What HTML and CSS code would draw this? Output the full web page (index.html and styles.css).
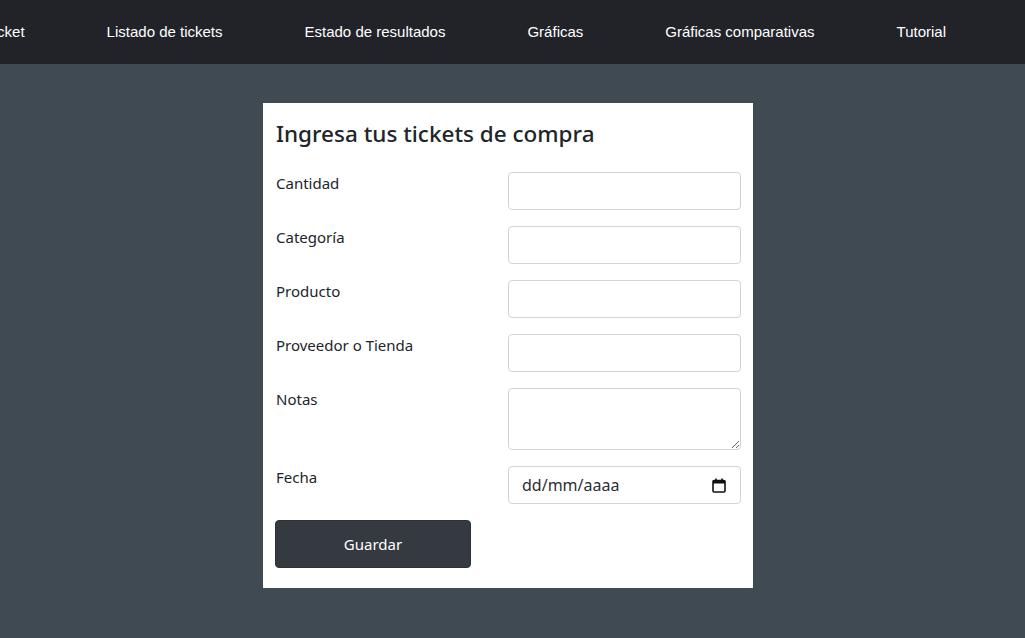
FILE: index.html
```html
<!DOCTYPE html>
<html lang="es">
<head>
<meta charset="utf-8">
<title>Tickets</title>
<link rel="stylesheet" href="styles.css">
</head>
<body>
<nav class="topnav">
  <a class="nav-link" href="#">Ingresar ticket</a>
  <a class="nav-link" href="#">Listado de tickets</a>
  <a class="nav-link" href="#">Estado de resultados</a>
  <a class="nav-link" href="#">Gráficas</a>
  <a class="nav-link" href="#">Gráficas comparativas</a>
  <a class="nav-link" href="#">Tutorial</a>
</nav>
<main class="main">
  <form class="card">
    <h4 class="card-title">Ingresa tus tickets de compra</h4>
    <div class="form-row">
      <label class="form-label" for="cantidad">Cantidad</label>
      <input class="form-control" id="cantidad" type="text">
    </div>
    <div class="form-row">
      <label class="form-label" for="categoria">Categoría</label>
      <input class="form-control" id="categoria" type="text">
    </div>
    <div class="form-row">
      <label class="form-label" for="producto">Producto</label>
      <input class="form-control" id="producto" type="text">
    </div>
    <div class="form-row">
      <label class="form-label" for="proveedor">Proveedor o Tienda</label>
      <input class="form-control" id="proveedor" type="text">
    </div>
    <div class="form-row">
      <label class="form-label" for="notas">Notas</label>
      <textarea class="form-control textarea" id="notas"></textarea>
    </div>
    <div class="form-row">
      <label class="form-label" for="fecha">Fecha</label>
      <div class="date-wrap">
        <input class="form-control date-input" id="fecha" type="text" placeholder="dd/mm/aaaa">
        <svg class="cal-icon" width="14" height="15" viewBox="0 0 14 15" aria-hidden="true">
          <rect x="1" y="2.5" width="12" height="11.5" rx="1" fill="none" stroke="#111" stroke-width="1.6"/>
          <rect x="1" y="2.5" width="12" height="3" fill="#111"/>
          <rect x="3.2" y="0.5" width="1.6" height="3" fill="#111"/>
          <rect x="9.2" y="0.5" width="1.6" height="3" fill="#111"/>
        </svg>
      </div>
    </div>
    <button class="btn" type="button">Guardar</button>
  </form>
</main>
</body>
</html>
```

FILE: styles.css
```css
html, body {
  margin: 0;
  padding: 0;
}
body {
  background: #404a53;
  font-family: "Noto Sans", "Open Sans", sans-serif;
  color: #212529;
  min-height: 638px;
  overflow: hidden;
}
.topnav {
  height: 64px;
  background: #212329;
  display: flex;
  align-items: center;
  justify-content: flex-end;
  gap: 82px;
  padding-right: 79px;
  white-space: nowrap;
  overflow: hidden;
}
.nav-link {
  font-family: "Liberation Sans", Arial, sans-serif;
  font-size: 15px;
  color: #ffffff;
  text-decoration: none;
  flex: none;
  line-height: 20px;
}
.main {
  display: flex;
  justify-content: center;
  padding: 39px 9px 0 0;
}
.card {
  width: 490px;
  box-sizing: border-box;
  background: #ffffff;
  padding: 16px 12px 20px 13px;
  display: flex;
  flex-direction: column;
}
.card-title {
  margin: 0 0 24px 0;
  font-size: 22.5px;
  font-weight: 500;
  line-height: 29px;
  color: #212529;
}
.form-row {
  display: grid;
  grid-template-columns: 1fr 233px;
  margin-bottom: 16px;
}
.form-label {
  font-size: 15px;
  line-height: 22px;
  padding-top: 0;
}
.form-control {
  box-sizing: border-box;
  width: 233px;
  height: 38px;
  border: 1px solid #ced4da;
  border-radius: 4px;
  background: #fff;
  font-family: inherit;
  font-size: 16px;
  padding: 6px 13px;
  margin: 0;
  outline: none;
  color: #212529;
}
.textarea {
  height: 62px;
  resize: vertical;
  display: block;
}
.date-wrap {
  position: relative;
  width: 233px;
  height: 38px;
}
.date-input::placeholder {
  color: #2b2f33;
  opacity: 1;
}
.cal-icon {
  position: absolute;
  right: 15px;
  top: 12px;
}
.btn {
  align-self: flex-start;
  width: 196px;
  height: 48px;
  margin-left: -1px;
  background: #343a40;
  color: #fff;
  border: 1px solid #2b3035;
  border-radius: 4px;
  font-family: inherit;
  font-size: 15px;
  cursor: pointer;
}
```
